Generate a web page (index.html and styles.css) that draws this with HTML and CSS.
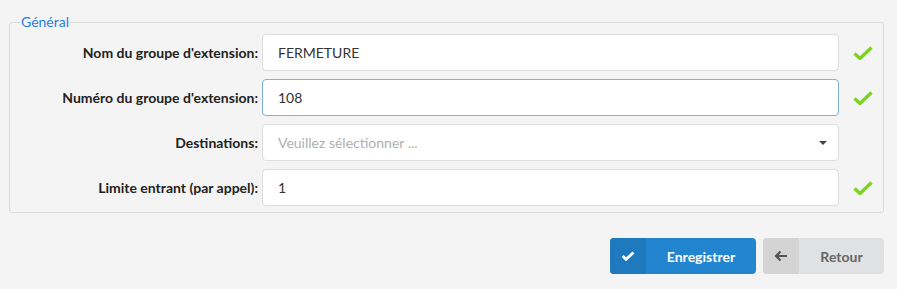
FILE: index.html
```html
<!DOCTYPE html>
<html lang="fr">
<head>
    <meta charset="UTF-8">
    <title>Groupe d'extension</title>
    <link rel="stylesheet" href="styles.css">
</head>
<body>
    <form class="page">
        <fieldset class="panel">
            <legend>Général</legend>

            <div class="row">
                <label class="row-label">Nom du groupe d'extension:</label>
                <div class="field">FERMETURE</div>
                <svg class="ok" viewBox="0 0 20 14"><path d="M1.5 7.5 L7 12.5 L18.5 1.5" /></svg>
            </div>

            <div class="row">
                <label class="row-label">Numéro du groupe d'extension:</label>
                <div class="field focused">108</div>
                <svg class="ok" viewBox="0 0 20 14"><path d="M1.5 7.5 L7 12.5 L18.5 1.5" /></svg>
            </div>

            <div class="row">
                <label class="row-label">Destinations:</label>
                <div class="field select">
                    <span class="placeholder">Veuillez sélectionner ...</span>
                    <span class="caret"></span>
                </div>
                <span></span>
            </div>

            <div class="row">
                <label class="row-label">Limite entrant (par appel):</label>
                <div class="field">1</div>
                <svg class="ok" viewBox="0 0 20 14"><path d="M1.5 7.5 L7 12.5 L18.5 1.5" /></svg>
            </div>
        </fieldset>

        <div class="actions">
            <button type="button" class="btn btn-primary">
                <span class="btn-icon">
                    <svg viewBox="0 0 16 12"><path d="M1.8 6 L5.8 9.8 L14.2 2" /></svg>
                </span>
                <span class="btn-text">Enregistrer</span>
            </button>
            <button type="button" class="btn btn-default">
                <span class="btn-icon">
                    <svg viewBox="0 0 14 12"><path d="M13 6 H2 M6.5 1.5 L2 6 L6.5 10.5" /></svg>
                </span>
                <span class="btn-text">Retour</span>
            </button>
        </div>
    </form>
</body>
</html>
```

FILE: styles.css
```css
/* Général */
body {
    margin: 0;
    background: #f4f4f4;
    font-family: Lato, "Open Sans", sans-serif;
    font-size: 14px;
    color: #333;
}

.page {
    padding: 13px 13px 0 9px;
}

/* Cadre */
.panel {
    margin: 0;
    padding: 0 0 6px 0;
    border: 1px solid #dcdcdc;
    border-radius: 3px;
}

.panel legend {
    margin-left: 10px;
    padding: 0 1px;
    line-height: 18px;
    font-size: 14px;
    color: #2a7de1;
}

/* Lignes du formulaire */
.row {
    display: grid;
    grid-template-columns: 248px 577px 1fr;
    column-gap: 4px;
    align-items: center;
    margin-top: 8px;
}

.row:first-of-type {
    margin-top: 3px;
}

.row-label {
    text-align: right;
    font-weight: bold;
    color: #222;
}

.field {
    box-sizing: border-box;
    height: 37px;
    display: flex;
    align-items: center;
    padding: 0 11px 0 15px;
    background: #fff;
    border: 1px solid #dedede;
    border-radius: 4px;
    color: #333;
}

.field.focused {
    border-color: #7fb3dd;
}

.select {
    justify-content: space-between;
}

.placeholder {
    color: #b0b0b0;
}

.caret {
    width: 0;
    height: 0;
    border-left: 4px solid transparent;
    border-right: 4px solid transparent;
    border-top: 4px solid #444;
}

.ok {
    width: 20px;
    height: 14px;
    margin-left: 10px;
    fill: none;
    stroke: #7ed321;
    stroke-width: 3.4;
}

/* Boutons */
.actions {
    display: flex;
    justify-content: flex-end;
    gap: 7px;
    margin-top: 25px;
}

.btn {
    display: flex;
    align-items: stretch;
    height: 36px;
    padding: 0;
    border: none;
    border-radius: 4px;
    overflow: hidden;
    font-family: inherit;
    font-size: 14px;
    font-weight: bold;
    cursor: pointer;
}

.btn-icon {
    width: 36px;
    display: flex;
    align-items: center;
    justify-content: center;
}

.btn-icon svg {
    width: 14px;
    height: 12px;
    fill: none;
    stroke-width: 3.2;
}

.btn-text {
    flex: 1;
    display: flex;
    align-items: center;
    justify-content: center;
}

.btn-primary {
    width: 146px;
    background: #2185d0;
    color: #fff;
}

.btn-primary .btn-icon {
    background: #1e79be;
}

.btn-primary .btn-icon svg {
    stroke: #fff;
}

.btn-default {
    width: 121px;
    background: #e0e1e2;
    color: #666;
}

.btn-default .btn-icon {
    background: #d4d4d5;
}

.btn-default .btn-icon svg {
    stroke: #555;
    stroke-width: 2.2;
}
```
